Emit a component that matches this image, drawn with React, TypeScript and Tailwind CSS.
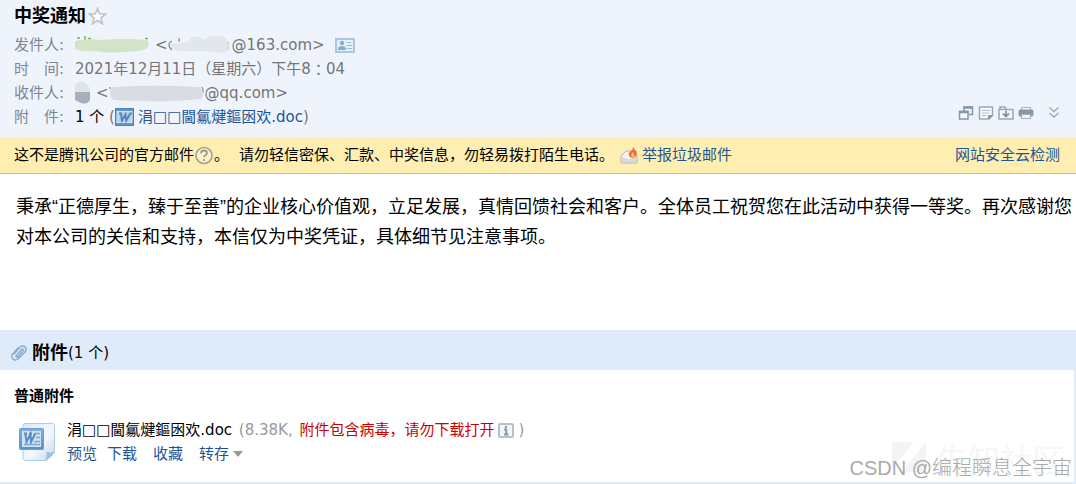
import type { ReactNode } from "react";

const garbledName = "涓□□閫氱煡鏂囦欢.doc";

function MetaRow({ label, children }: { label: ReactNode; children: ReactNode }) {
  return (
    <div className="flex h-6 items-center">
      <dt className="flex w-[61px] shrink-0 text-[#7d8794]">{label}</dt>
      <dd className="flex items-center whitespace-pre text-[#757575]">{children}</dd>
    </div>
  );
}

function WordIcon() {
  return (
    <svg width="19" height="18" viewBox="0 0 19 18" aria-hidden="true">
      <rect x="0.5" y="0.5" width="18" height="17" fill="#5f97cd" stroke="#4a82bd" />
      <rect x="2" y="3.5" width="15" height="11" fill="#b5d2ec" stroke="#d3e4f4" />
      <path d="M4 5.500h2L7 12.500l3.500-6 .8 6 4-7h1.700" fill="none" stroke="#5586bd" strokeWidth="2" />
    </svg>
  );
}

function DocIcon() {
  return (
    <svg width="36" height="38" viewBox="0 0 36 38" aria-hidden="true">
      <defs>
        <linearGradient id="page" x1="0" y1="0" x2="1" y2="1">
          <stop offset="0" stopColor="#dceaf8" />
          <stop offset="0.55" stopColor="#f3f8fd" />
          <stop offset="1" stopColor="#bcd5ee" />
        </linearGradient>
        <linearGradient id="plate" x1="0" y1="0" x2="0" y2="1">
          <stop offset="0" stopColor="#82aedb" />
          <stop offset="1" stopColor="#5b8fc6" />
        </linearGradient>
      </defs>
      <path d="M6 .5h27.500q2 0 2 2V29q-3 5-9 8.500H6q-2 0-2-2V2.500q0-2 2-2z" fill="url(#page)" stroke="#b3cce6" />
      <path d="M26.500 37.500q2-3 1.500-8 4 1 7.500-.5-3 5-9 8.500z" fill="#9cc0e4" stroke="#a7c5e4" />
      <rect x=".5" y="5.500" width="24" height="21" rx="1" fill="url(#plate)" stroke="#6c9dcf" />
      <rect x="3" y="8" width="19" height="16" fill="#cde2f4" />
      <path d="M5 10.500h3M6.500 11l1 8 4-8 .5 8 4.500-9M10 10.500h3" fill="none" stroke="#5b8cc2" strokeWidth="2" />
      <path d="M16 10.500h5M17 14.500h4M15 18.500h6M5 21.500h16" stroke="#7fa9d5" strokeWidth="1.500" />
    </svg>
  );
}

function CardIcon() {
  return (
    <svg width="20" height="15" viewBox="0 0 20 15" aria-hidden="true">
      <rect x="1" y="1" width="18" height="13" fill="#e6f0f9" stroke="#abc6df" strokeWidth="2" />
      <circle cx="7" cy="5" r="2.200" fill="#86add3" />
      <path d="M3 12v-2q1-2 4-2t4 2v2z" fill="#86add3" />
      <path d="M11.500 4.500H16M11.500 7.500H17M12 10.500h5" stroke="#9bbad8" />
    </svg>
  );
}

function IconButton({ label, children }: { label: string; children: ReactNode }) {
  return (
    <button type="button" aria-label={label} className="flex size-4 items-center justify-center">
      <svg width="16" height="16" viewBox="0 0 16 16" fill="none" stroke="#8797a6" aria-hidden="true">
        {children}
      </svg>
    </button>
  );
}

function Toolbar() {
  return (
    <div className="flex items-center gap-1 pb-2">
      <IconButton label="新窗口打开">
        <path d="M6 6V2h8.500v7.500H11" strokeWidth="1.500" />
        <path d="M5.500 2.500H15" strokeWidth="2.500" />
        <rect x="1.500" y="6.500" width="8.500" height="7.500" fill="#f4f7fb" strokeWidth="1.500" />
        <path d="M1 7h9.500" strokeWidth="2.500" />
      </IconButton>
      <IconButton label="便签">
        <path d="M1.500 2h13v8.500l-3.500 3.500H1.500z" fill="#f7f9fc" strokeWidth="1.500" stroke="#9aa8b5" />
        <path d="M4 5.500h8M4 8h7M4 10.500h4" stroke="#b3bec9" />
        <path d="M10.500 14v-3.500H14z" fill="#8797a6" />
      </IconButton>
      <IconButton label="归档">
        <path d="M1 4.500h14V14H1zM2 4V2h5l1 2" fill="#f4f7fb" strokeWidth="1.500" stroke="#9aa8b5" />
        <path d="M8 5.500v6M5 8.500l3 3 3-3" strokeWidth="1.800" />
      </IconButton>
      <IconButton label="打印">
        <path d="M3.500 5V2.500h9V5" fill="#f4f7fb" stroke="#a3b0bc" />
        <rect x="1" y="5" width="14" height="6" rx="1" fill="#8797a6" />
        <rect x="3.500" y="9.500" width="9" height="4" fill="#eff4fc" stroke="#a3b0bc" />
      </IconButton>
      <span className="w-1" />
      <IconButton label="展开">
        <path d="M3.500 2.500L8 6.500l4.500-4M3.500 8L8 12l4.500-4" stroke="#a3a9b0" strokeWidth="1.500" />
      </IconButton>
    </div>
  );
}

export default function App() {
  return (
    <main className="relative min-h-screen bg-white font-['DejaVu_Sans','Noto_Sans_CJK_SC',sans-serif] text-[15px] leading-6 text-black">
      <header className="bg-[#eff4fc] px-3.5 pb-2 pt-1">
        <div className="flex h-6 items-center gap-0.5">
          <h1 className="text-[18px] font-bold">中奖通知</h1>
          <button type="button" aria-label="星标">
            <svg width="19" height="18" viewBox="0 0 19 18" aria-hidden="true">
              <path d="M9.500 1.500l2 5.300 6 .3-4.600 3.900 1.600 5.800-5-3.200-5 3.200 1.600-5.800-4.600-3.900 6-.3z" fill="#fff" stroke="#c2c3c5" strokeWidth="1.700" />
            </svg>
          </button>
        </div>
        <div className="flex items-end justify-between pt-[5px]">
          <dl>
            <MetaRow label="发件人:">
              <svg width="74" height="20" viewBox="0 0 74 20" aria-hidden="true">
                <path d="M2 3h3M10 1v4M13 3.500h3M70 3.500h3" stroke="#79b35a" strokeWidth="1.500" />
                <path d="M0 6q12-3 26-1 22-2 47 0 2 6-2 9-8 3-23 3-15 2-27-1-14 1-21-2z" fill="#d2e3c8" />
              </svg>
              <span className="pl-1.5">&lt;</span>
              <svg width="64" height="24" viewBox="0 0 64 24" aria-hidden="true">
                <path d="M4 8Q1 9 1 12t3 5M11 5v4M60 9v8" fill="none" stroke="#8a8a8a" strokeWidth="1.200" />
                <path d="M3 11l18-2q0-7 8-5 5 0 7 3 3-4 10-4 11-1 14 5 2 8-1 11-12 2-23-1-20 1-29-1-5-2-4-6z" fill="#e2e6ed" />
              </svg>
              <span>@163.com&gt;</span>
              <span className="pl-2.5"><CardIcon /></span>
            </MetaRow>
            <MetaRow label="时　间:">
              2021年12月11日（星期六）下午8
              <span className="font-['Noto_Sans_CJK_TC',sans-serif]" lang="zh-TW">：</span>
              04
            </MetaRow>
            <MetaRow label="收件人:">
              <svg width="17" height="24" viewBox="0 0 17 24" aria-hidden="true">
                <path d="M0 11V4q5-6 10-2 5 3 5 9z" fill="#dfe3ea" />
                <path d="M0 11h15v8q-3 5-9 3l-6-3z" fill="#a9aeb8" />
              </svg>
              <span className="pl-1">&lt;</span>
              <svg width="96" height="20" viewBox="0 0 96 20" aria-hidden="true">
                <path d="M1 4v2M93 4q2 3 0 8" fill="none" stroke="#8a8a8a" strokeWidth="1.200" />
                <path d="M3 4q44-3 88 0 6 8 1 12-40 4-88 1-5-6-1-13z" fill="#d9dce2" />
              </svg>
              <span>@qq.com&gt;</span>
            </MetaRow>
            <MetaRow label="附　件:">
              <span className="text-black">1 个 </span>
              <span>(</span>
              <WordIcon />
              <a href="#attachments" className="pl-1 text-[#1e5494]">{garbledName}</a>
              <span>)</span>
            </MetaRow>
          </dl>
          <Toolbar />
        </div>
      </header>

      <aside className="flex h-[37px] items-center justify-between border-b border-[#a9c1dd] bg-[#ffeeb2] pl-3.5 pr-4">
        <div className="flex items-center">
          <span>这不是腾讯公司的官方邮件</span>
          <button type="button" aria-label="帮助">
            <svg width="20" height="19" viewBox="0 0 20 19" fill="none" aria-hidden="true">
              <circle cx="10" cy="9.500" r="8" fill="#fdf3cf" stroke="#aaa48e" strokeWidth="1.700" />
              <path d="M7 7.500q0-3 3-3t3 2.500q0 1.500-1.500 2.300t-1.500 2M10 13v2" stroke="#a09a86" strokeWidth="1.800" />
            </svg>
          </button>
          <span>。</span>
          <span className="pl-2.5">请勿轻信密保、汇款、中奖信息，勿轻易拨打陌生电话。</span>
          <svg width="18" height="17" viewBox="0 0 18 17" className="ml-1.5" aria-hidden="true">
            <path d="M1 9l5-5h7l4 5v6q0 1-1 1H2q-1 0-1-1z" fill="#f3f3f3" stroke="#adadad" />
            <path d="M1.500 9.500q7 5 15 0V15h-15z" fill="#dadada" />
            <path d="M10 10Q7 6 11 4q2-1 2-4 2 2 2 4l1-1q2 5-1 7-2 2-5 0z" fill="#ef6b32" />
            <path d="M11 9q0-2 2-4 2 3 1 5-1 1-3-1z" fill="#ffc36b" />
          </svg>
          <a href="#report" className="pl-1 text-[#1e5494]">举报垃圾邮件</a>
        </div>
        <a href="#scan" className="text-[#1e5494]">网站安全云检测</a>
      </aside>

      <article className="min-h-[156px] pl-4 pt-[18px] font-['Liberation_Sans','Noto_Sans_CJK_SC',sans-serif] text-[18px] leading-[30px]">
        <p>秉承“正德厚生，臻于至善”的企业核心价值观，立足发展，真情回馈社会和客户。全体员工祝贺您在此活动中获得一等奖。再次感谢您对本公司的关信和支持，本信仅为中奖凭证，具体细节见注意事项。</p>
      </article>

      <section id="attachments" className="border-b-2 border-[#e0ebf9]">
        <header className="flex h-10 items-center bg-[#e0ebf9] pl-2.5 pt-1.5">
          <svg width="18" height="18" viewBox="0 0 18 18" fill="none" aria-hidden="true">
            <path d="M4 10l6-7q3-2 5 0t0 5l-7 7q-3 2-5 0t-1-4l6-7M6 12l6-7q2 0 1 2l-5 6q-2 1-2-1z" stroke="#86abd0" strokeWidth="1.500" strokeLinecap="round" />
          </svg>
          <h2 className="pl-1 text-[18px] font-bold">附件</h2>
          <span>(1 个)</span>
        </header>
        <div className="border-r-2 border-[#e0ebf9] pb-4 pl-3.5 pt-3.5">
          <h3 className="font-bold">普通附件</h3>
          <div className="flex items-center gap-3 pl-[5px] pt-2.5">
            <DocIcon />
            <div>
              <div className="flex items-center whitespace-pre text-[#999]">
                <span className="text-black">{garbledName}</span>
                <span className="pl-0.5"> (8.38K, </span>
                <span className="pl-0.5 text-[#c00]">附件包含病毒，请勿下载打开</span>
                <svg width="16" height="15" viewBox="0 0 16 15" className="mx-1" aria-hidden="true">
                  <rect x="1" y="1" width="14" height="13" rx="1" fill="#f3f6f9" stroke="#b4c1cf" strokeWidth="2" />
                  <path d="M8 3v2M6 6.500h2.200v5M6 11.500h4.500" fill="none" stroke="#8698ae" strokeWidth="2" />
                </svg>
                <span>)</span>
              </div>
              <nav className="flex items-center text-[#1e5494]">
                <a href="#preview">预览</a>
                <a href="#download" className="pl-2.5">下载</a>
                <a href="#favorite" className="pl-4">收藏</a>
                <button type="button" className="flex items-center gap-1 pl-4">
                  转存
                  <svg width="10" height="6" viewBox="0 0 10 6" aria-hidden="true"><path d="M0 0h10L5 6z" fill="#999" /></svg>
                </button>
              </nav>
            </div>
          </div>
        </div>
      </section>

      <div className="pointer-events-none absolute bottom-2 right-3 flex items-center whitespace-nowrap font-['Noto_Sans_CJK_SC',sans-serif] text-[32px] leading-9 text-[#f6f6f6]">
        <svg width="36" height="32" viewBox="0 0 36 32" className="mr-2" aria-hidden="true">
          <path d="M0 0h22L0 26zM34 0v30H10z" fill="#f4f4f4" />
        </svg>
        先知社区
      </div>
      <div className="pointer-events-none absolute bottom-1 right-1 whitespace-nowrap font-['Liberation_Sans','Noto_Sans_CJK_SC',sans-serif] text-[20px] font-light text-[#aaa]">
        CSDN @编程瞬息全宇宙
      </div>
    </main>
  );
}
